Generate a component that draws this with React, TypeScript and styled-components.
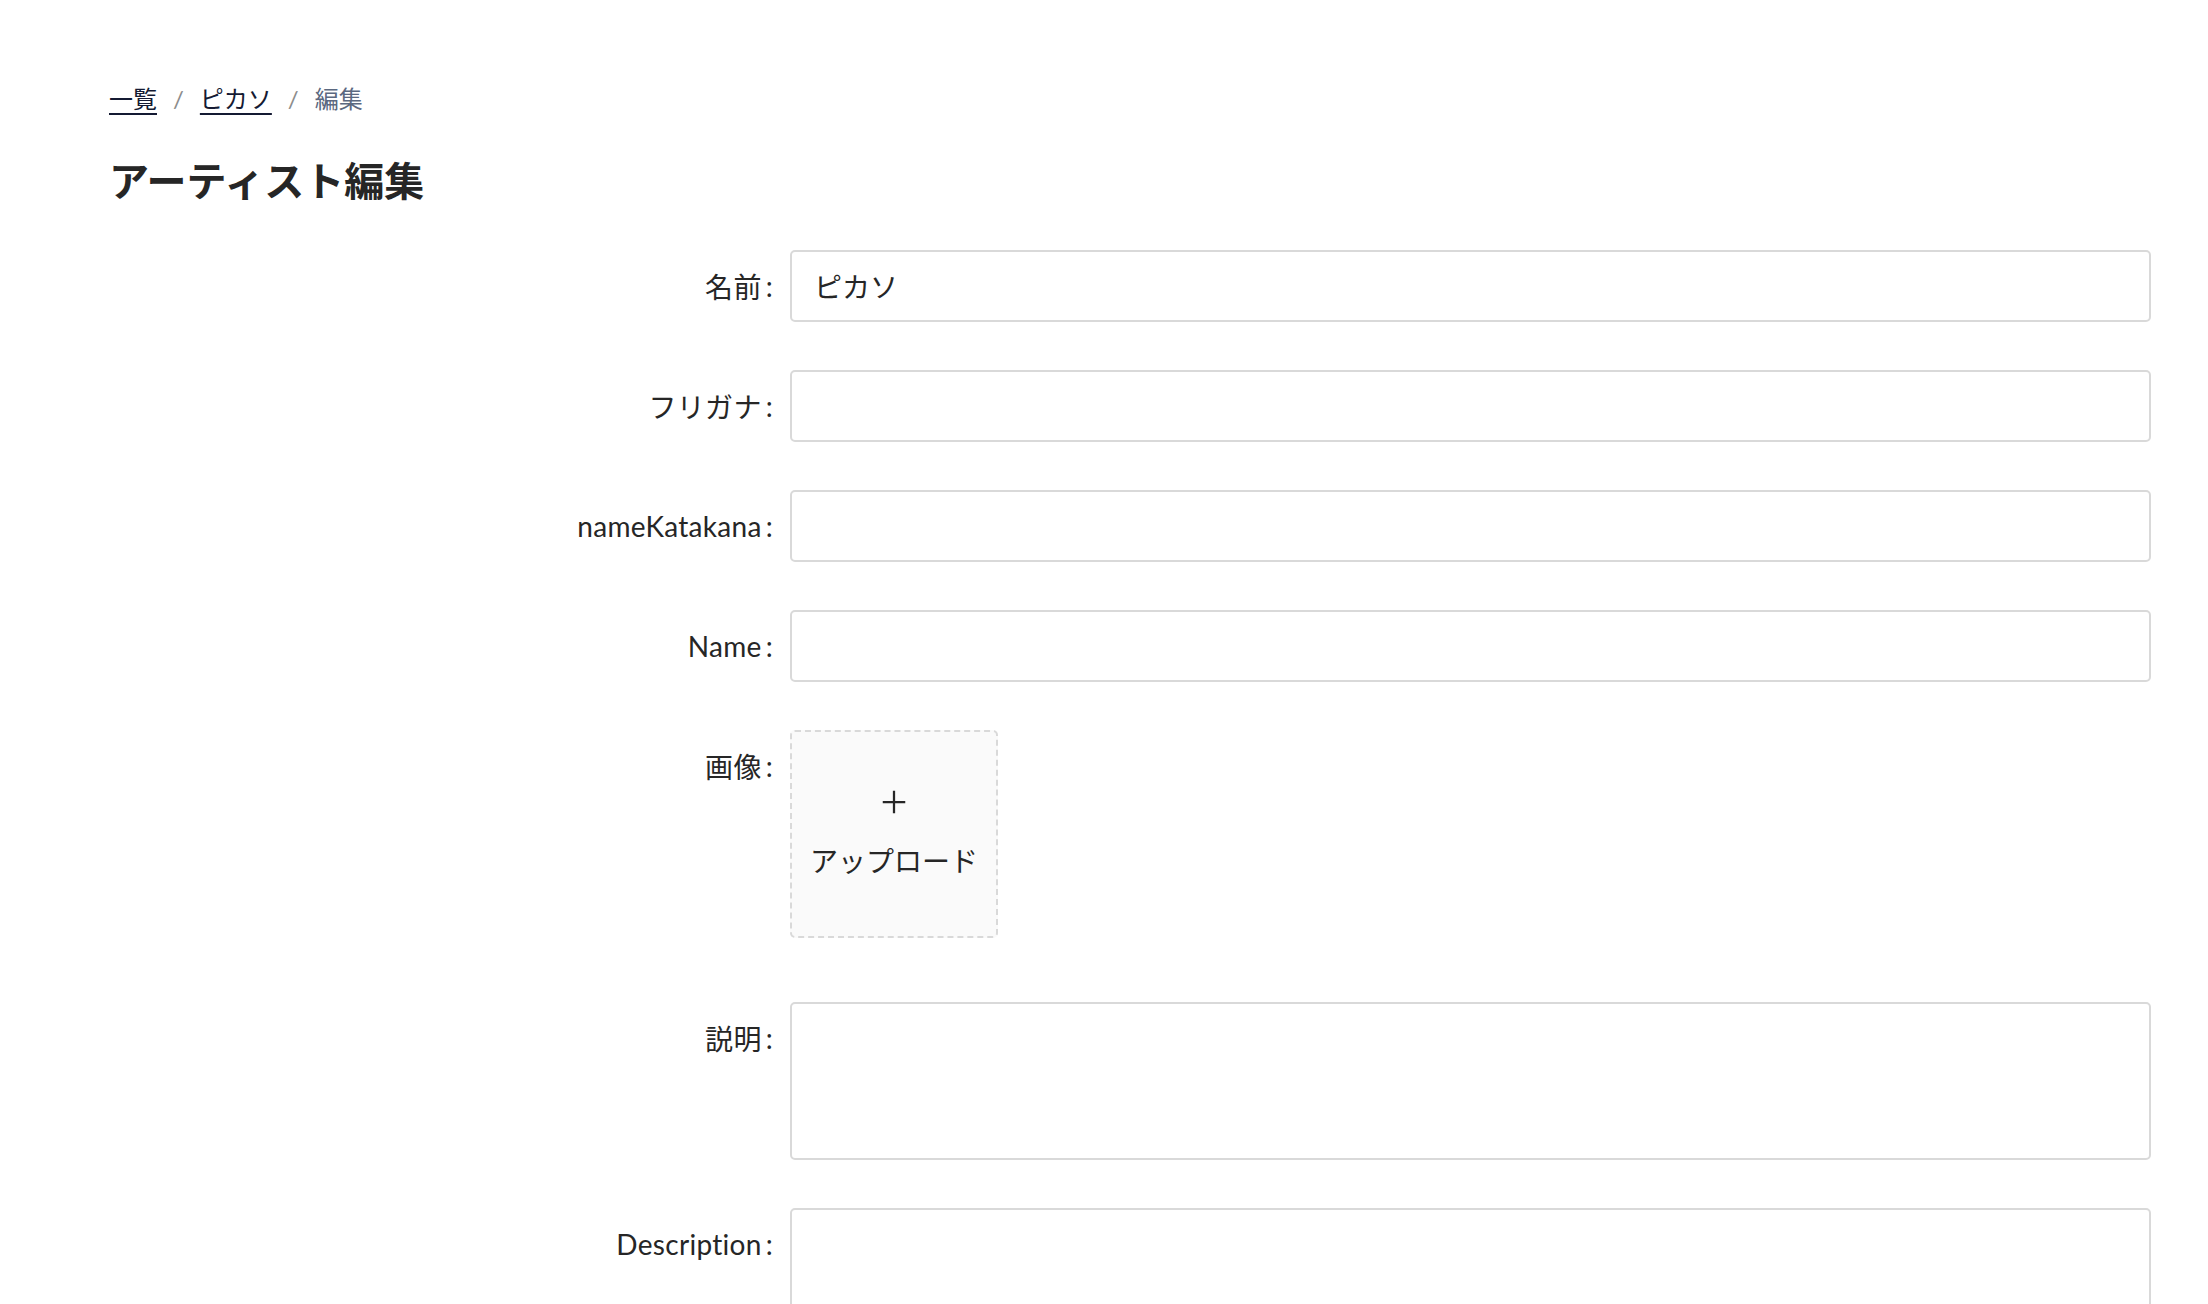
import React from "react";
import styled, { createGlobalStyle } from "styled-components";

const GlobalStyle = createGlobalStyle`
  html, body {
    margin: 0;
    padding: 0;
    background: #fff;
  }
  body {
    font-family: "Lato", "Noto Sans CJK JP", sans-serif;
    color: #262626;
  }
`;

export default function App() {
  return (
    <>
      <GlobalStyle />
      <Page>
        <Breadcrumb>
          <Crumb href="#">一覧</Crumb>
          <Separator>/</Separator>
          <Crumb href="#">ピカソ</Crumb>
          <Separator>/</Separator>
          <Current>編集</Current>
        </Breadcrumb>
        <Title>アーティスト編集</Title>
        <Form>
          <FieldRow label="名前">
            <TextInput defaultValue="ピカソ" />
          </FieldRow>
          <FieldRow label="フリガナ">
            <TextInput />
          </FieldRow>
          <FieldRow label="nameKatakana">
            <TextInput />
          </FieldRow>
          <FieldRow label="Name">
            <TextInput />
          </FieldRow>
          <FieldRow label="画像" tight>
            <UploadCard>
              <PlusIcon viewBox="0 0 24 24">
                <path d="M12 3v18M3 12h18" />
              </PlusIcon>
              <UploadText>アップロード</UploadText>
            </UploadCard>
          </FieldRow>
          <FieldRow label="説明">
            <TextArea />
          </FieldRow>
          <FieldRow label="Description">
            <TextArea />
          </FieldRow>
        </Form>
      </Page>
    </>
  );
}

function FieldRow({
  label,
  tight,
  children,
}: {
  label: string;
  tight?: boolean;
  children: React.ReactNode;
}) {
  return (
    <Row $tight={tight}>
      <Label>
        {label}
        <Colon>:</Colon>
      </Label>
      <Control>{children}</Control>
    </Row>
  );
}

const Page = styled.div`
  padding: 77px 57px 0 109px;
  min-height: 1304px;
  box-sizing: border-box;
`;

const Breadcrumb = styled.nav`
  display: flex;
  align-items: center;
  gap: 16px;
  font-size: 24px;
  line-height: 44px;
  height: 44px;
`;

const Crumb = styled.a`
  color: #141a33;
  text-decoration: underline;
  text-underline-offset: 5px;
  text-decoration-thickness: 2px;
`;

const Separator = styled.span`
  color: #8c8c8c;
`;

const Current = styled.span`
  color: #5b6880;
`;

const Title = styled.h1`
  margin: 32px 0 41px;
  font-size: 40px;
  line-height: 56px;
  font-weight: 700;
  color: #262626;
`;

const Form = styled.form`
  display: flex;
  flex-direction: column;
`;

const Row = styled.div<{ $tight?: boolean }>`
  display: grid;
  grid-template-columns: 681px 1fr;
  margin-bottom: ${(p) => (p.$tight ? "64px" : "48px")};
`;

const Label = styled.label`
  display: flex;
  justify-content: flex-end;
  align-items: center;
  height: 72px;
  padding-right: 17px;
  font-size: 28px;
  font-weight: 400;
  letter-spacing: 0.3px;
  color: #262626;
  white-space: nowrap;
`;

const Colon = styled.span`
  margin-left: 4px;
`;

const Control = styled.div`
  display: flex;
  min-width: 0;
`;

const TextInput = styled.input`
  width: 100%;
  height: 72px;
  box-sizing: border-box;
  border: 2px solid #d9d9d9;
  border-radius: 5px;
  padding: 0 22px;
  font-family: inherit;
  font-size: 28px;
  color: #262626;
  background: #fff;
  outline: none;
`;

const TextArea = styled.textarea`
  width: 100%;
  height: 158px;
  box-sizing: border-box;
  border: 2px solid #d9d9d9;
  border-radius: 5px;
  padding: 10px 22px;
  font-family: inherit;
  font-size: 28px;
  resize: none;
  outline: none;
`;

const UploadCard = styled.div`
  width: 208px;
  height: 208px;
  box-sizing: border-box;
  border: 2px dashed #d9d9d9;
  border-radius: 5px;
  background: #fafafa;
  display: flex;
  flex-direction: column;
  align-items: center;
  justify-content: center;
  gap: 24px;
`;

const PlusIcon = styled.svg`
  width: 30px;
  height: 30px;
  fill: none;
  stroke: #262626;
  stroke-width: 1.8;
`;

const UploadText = styled.span`
  font-size: 28px;
  line-height: 40px;
  color: #262626;
`;
